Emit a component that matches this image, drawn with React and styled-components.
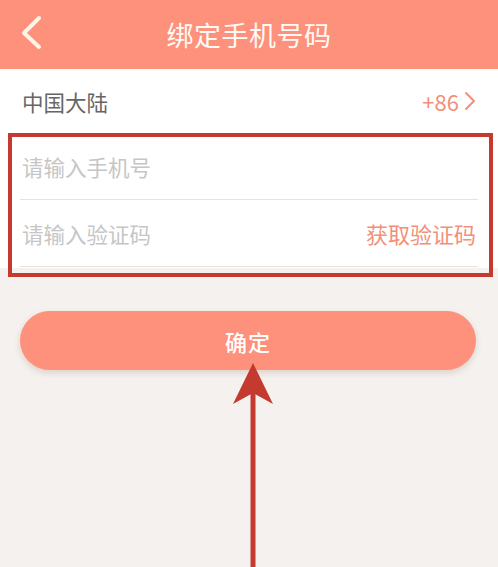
import React from "react";
import styled, { createGlobalStyle } from "styled-components";

const GlobalStyle = createGlobalStyle`
    html, body {
        margin: 0;
        padding: 0;
        background: #f5f1ee;
        font-family: "Noto Sans CJK SC", "Noto Sans", sans-serif;
    }
`;

const Page = styled.div`
    position: relative;
    width: 498px;
    height: 567px;
    overflow: hidden;
    background: #f5f1ee;
`;

const Header = styled.div`
    position: relative;
    height: 69px;
    background: #fe917b;
    display: flex;
    align-items: center;
    justify-content: center;
`;

const BackButton = styled.svg`
    position: absolute;
    left: 18px;
    top: 14px;
`;

const Title = styled.div`
    color: #fffaf5;
    font-size: 27px;
    letter-spacing: 0.5px;
    margin-left: 0;
`;

const Panel = styled.div`
    background: #ffffff;
`;

const Row = styled.div`
    height: ${(p) => p.h || 66}px;
    margin: 0 20px;
    display: flex;
    align-items: center;
    justify-content: space-between;
    border-bottom: ${(p) => (p.line ? "1px solid #e3e3e3" : "none")};
    box-sizing: border-box;
`;

const Label = styled.span`
    font-size: 21.5px;
    color: ${(p) => (p.muted ? "#c6c6c6" : "#666666")};
    padding-left: 2px;
`;

const Accent = styled.span`
    display: flex;
    align-items: center;
    gap: 5px;
    font-size: 22px;
    color: #f2907a;
    padding-right: 2px;
`;

const Fields = styled.div`
    position: relative;
    padding-bottom: 1px;
`;

const Highlight = styled.div`
    position: absolute;
    left: 8px;
    right: 5px;
    top: 0;
    bottom: -9px;
    border: 4px solid #c43a2e;
    pointer-events: none;
`;

const Actions = styled.div`
    padding: 43px 20px 0 20px;
`;

const Confirm = styled.button`
    width: 456px;
    height: 59px;
    border: none;
    border-radius: 30px;
    background: #fe917b;
    box-shadow: 0 3px 6px rgba(120, 60, 40, 0.18);
    color: #ffffff;
    font-family: "Noto Sans CJK SC", sans-serif;
    font-size: 22px;
    font-weight: 500;
    letter-spacing: 1px;
`;

const Arrow = styled.svg`
    position: absolute;
    left: 228px;
    top: 361px;
`;

const App = () => {
    return (
        <Page>
            <GlobalStyle />
            <Header>
                <BackButton width="30" height="40" viewBox="0 0 30 40">
                    <polyline
                        points="21,4 6,19 21,33"
                        fill="none"
                        stroke="#fff3e4"
                        strokeWidth="4"
                        strokeLinecap="round"
                        strokeLinejoin="round"
                    />
                </BackButton>
                <Title>绑定手机号码</Title>
            </Header>
            <Panel>
                <Row h={64}>
                    <Label>中国大陆</Label>
                    <Accent>
                        +86
                        <svg width="12" height="20" viewBox="0 0 12 20">
                            <polyline
                                points="2,2 10,10 2,18"
                                fill="none"
                                stroke="#f2907a"
                                strokeWidth="2"
                                strokeLinecap="round"
                                strokeLinejoin="round"
                            />
                        </svg>
                    </Accent>
                </Row>
                <Fields>
                    <Row h={67} line>
                        <Label muted>请输入手机号</Label>
                    </Row>
                    <Row h={67} line>
                        <Label muted>请输入验证码</Label>
                        <Accent>获取验证码</Accent>
                    </Row>
                    <Highlight />
                </Fields>
            </Panel>
            <Actions>
                <Confirm>确定</Confirm>
            </Actions>
            <Arrow width="50" height="210" viewBox="0 0 50 210">
                <line x1="25" y1="30" x2="25" y2="210" stroke="#c43a2e" strokeWidth="5" />
                <polygon points="25,2 45,43 25,32 5,43" fill="#c43a2e" />
            </Arrow>
        </Page>
    );
};

export default App;
